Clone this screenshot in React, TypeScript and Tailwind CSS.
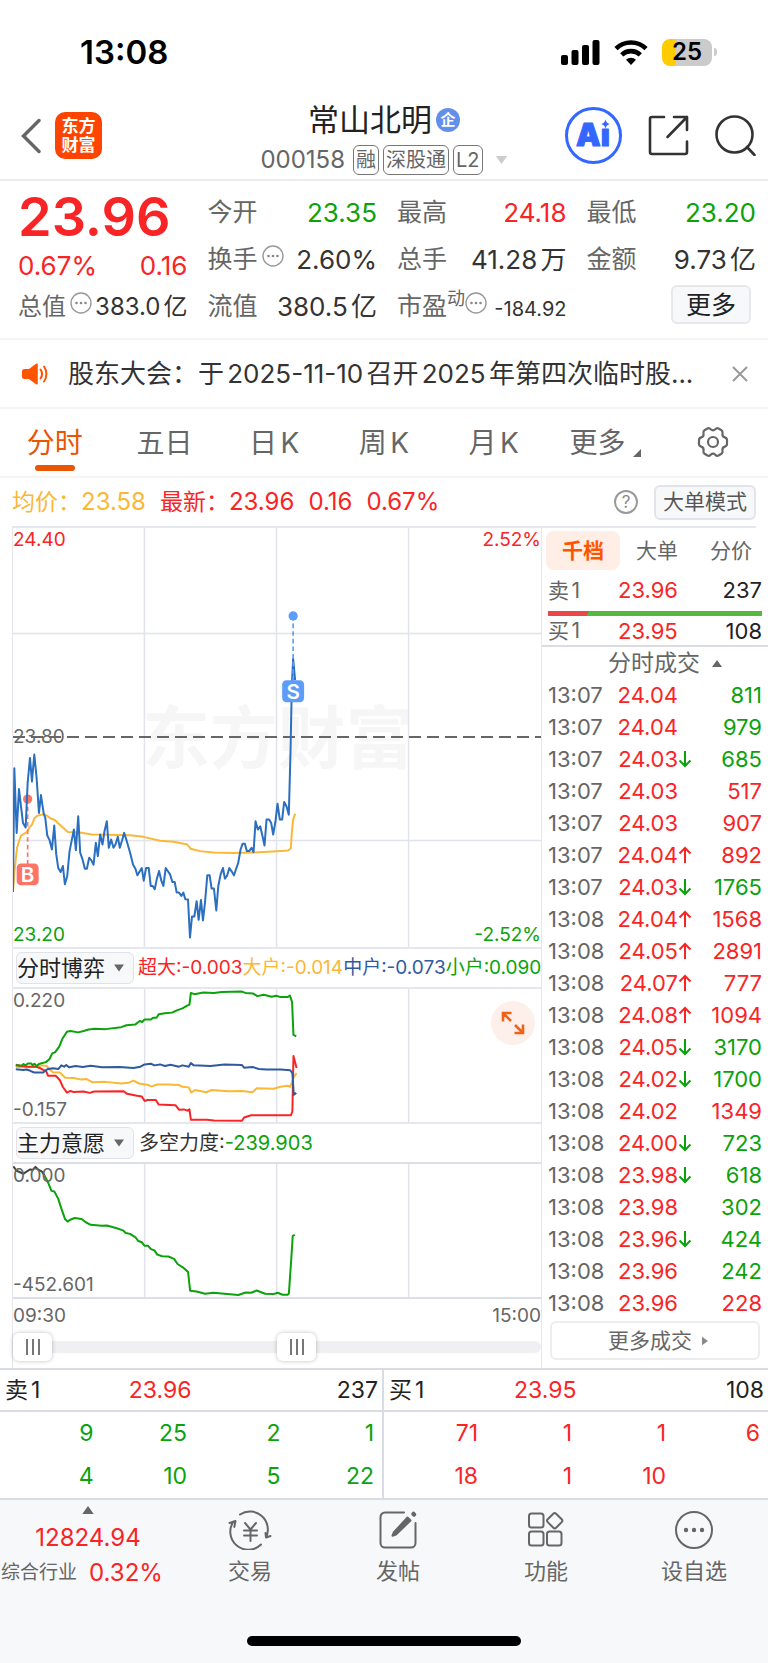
import { useState } from 'react';
import type { ReactNode } from 'react';

const RED = 'text-[#f92425]';
const GREEN = 'text-[#0ba20b]';

interface Trade {
  time: string;
  price: string;
  dir?: 'up' | 'down';
  volume: number;
  buy?: boolean;
}

const trades: Trade[] = [
  { time: '13:07', price: '24.04', volume: 811 },
  { time: '13:07', price: '24.04', volume: 979 },
  { time: '13:07', price: '24.03', dir: 'down', volume: 685 },
  { time: '13:07', price: '24.03', volume: 517, buy: true },
  { time: '13:07', price: '24.03', volume: 907, buy: true },
  { time: '13:07', price: '24.04', dir: 'up', volume: 892, buy: true },
  { time: '13:07', price: '24.03', dir: 'down', volume: 1765 },
  { time: '13:08', price: '24.04', dir: 'up', volume: 1568, buy: true },
  { time: '13:08', price: '24.05', dir: 'up', volume: 2891, buy: true },
  { time: '13:08', price: '24.07', dir: 'up', volume: 777, buy: true },
  { time: '13:08', price: '24.08', dir: 'up', volume: 1094, buy: true },
  { time: '13:08', price: '24.05', dir: 'down', volume: 3170 },
  { time: '13:08', price: '24.02', dir: 'down', volume: 1700 },
  { time: '13:08', price: '24.02', volume: 1349, buy: true },
  { time: '13:08', price: '24.00', dir: 'down', volume: 723 },
  { time: '13:08', price: '23.98', dir: 'down', volume: 618 },
  { time: '13:08', price: '23.98', volume: 302 },
  { time: '13:08', price: '23.96', dir: 'down', volume: 424 },
  { time: '13:08', price: '23.96', volume: 242 },
  { time: '13:08', price: '23.96', volume: 228, buy: true },
];

const depth = [
  { label: '卖1', price: '23.96', volume: 237, color: GREEN, rows: [['9', '25', '2', '1'], ['4', '10', '5', '22']] },
  { label: '买1', price: '23.95', volume: 108, color: RED, rows: [['71', '1', '1', '6'], ['18', '1', '10', '']] },
];

const periods = ['分时', '五日', '日K', '周K', '月K'];

const PRICE_LINE =
  '38,1118 42,745 49,940 56,808 62,860 68,910 76,924 82,790 89,714 95,785 102,704 109,775 116,880 122,826 130,880 135,895 141,948 148,962 155,990 162,918 168,1005 174,1046 181,1058 188,1040 194,1095 201,1070 208,995 214,965 221,930 227,992 234,890 240,1000 247,1020 254,1048 260,1048 267,1015 273,1022 280,1036 287,970 293,1010 300,945 307,975 313,935 320,905 326,985 333,960 340,985 346,975 353,952 359,985 366,962 372,940 380,965 390,1000 399,1036 406,1048 412,1068 425,1046 431,1084 438,1046 446,1046 452,1100 458,1100 464,1110 470,1080 477,1055 484,1085 490,1100 497,1046 510,1065 517,1088 524,1088 530,1120 537,1120 544,1130 550,1120 556,1140 564,1141 570,1255 576,1192 583,1192 590,1146 596,1202 603,1142 609,1204 615,1150 622,1068 629,1068 635,1108 642,1108 649,1174 655,1100 662,1065 669,1046 675,1078 682,1068 688,1046 695,1056 702,1068 715,1030 722,990 728,973 735,973 741,995 748,995 755,985 761,998 767,905 774,930 781,920 788,950 794,978 800,900 808,900 814,910 820,945 827,905 833,852 840,900 847,900 853,847 860,860 867,885 872,700 876,500 880,415 886,480';
const AVG_LINE =
  '38,1118 42,1060 50,985 62,948 80,938 86,926 95,915 103,895 112,888 130,884 140,888 150,896 165,902 178,915 203,937 235,938 275,945 320,946 390,947 430,952 480,964 520,967 560,974 566,980 572,988 600,995 640,999 700,1001 760,999 820,996 865,993 873,987 876,940 880,900 886,882';

const SMALL_HOLDERS =
  '44,374 60,375 66,370 72,374 78,368 88,368 92,374 97,369 104,376 110,370 130,364 140,355 148,337 156,334 168,316 178,290 190,270 200,268 222,272 238,268 252,263 270,261 300,262 345,256 360,250 385,248 398,237 405,240 412,232 430,232 436,227 446,227 452,216 470,213 490,211 504,204 520,198 532,190 540,186 544,150 554,154 580,149 610,150 632,147 690,146 700,150 722,152 734,160 752,156 775,162 788,159 800,163 820,163 827,158 833,178 837,280 845,284';
const MID_HOLDERS =
  '44,386 66,388 74,387 84,390 96,396 122,396 134,386 150,383 166,385 174,374 182,378 188,373 196,380 215,376 235,379 258,375 290,380 340,379 380,382 400,378 412,371 430,369 440,374 456,371 470,376 486,372 510,378 520,374 538,378 544,367 552,374 600,376 640,371 690,373 696,381 720,379 738,385 760,387 800,387 828,389 834,398 838,465 845,459';
const LARGE_HOLDERS =
  '44,378 70,380 100,379 120,374 132,376 140,386 150,395 170,396 185,412 210,413 230,418 245,416 262,426 300,425 345,430 365,428 380,421 396,430 420,434 432,439 448,433 480,433 510,435 520,440 538,442 545,458 556,450 588,457 604,450 650,454 690,453 720,457 732,445 780,446 800,440 820,437 828,440 838,410 846,398';
const HUGE_HOLDERS =
  '44,372 60,376 80,378 100,378 112,382 122,388 130,390 136,406 158,406 170,420 178,440 190,458 200,453 208,456 238,455 255,459 268,455 352,454 362,462 390,468 404,470 412,484 420,481 444,481 452,495 500,497 510,511 524,510 534,514 540,510 544,542 590,542 610,544 690,545 696,535 716,528 830,528 834,515 837,345 846,382';

const WILL_START = '37,132 46,146 66,155 76,148 84,142 92,143 100,134 108,142 118,148 126,160';
const WILL_LINE =
  '126,160 136,182 146,208 154,210 165,232 174,262 185,296 192,303 198,298 212,292 232,295 244,305 258,313 290,316 304,315 330,323 350,330 358,338 370,341 386,352 394,363 404,367 412,378 422,378 430,388 440,392 448,405 462,410 480,411 496,418 506,434 522,445 536,459 542,517 560,519 585,526 608,523 640,526 680,530 700,522 716,523 732,516 756,526 780,527 792,523 806,529 820,529 824,525 830,430 835,347 841,344';

function Triangle({ className }: { className?: string }) {
  return (
    <svg viewBox="0 0 10 7" className={className} aria-hidden="true">
      <path d="M0 7 5 0l5 7z" fill="currentColor" />
    </svg>
  );
}

function MoreDots({ className = '' }: { className?: string }) {
  return (
    <svg viewBox="0 0 22 22" className={`size-[22px] shrink-0 ${className}`} fill="none" aria-hidden="true">
      <circle cx="11" cy="11" r="10" stroke="#999" strokeWidth="1.4" />
      <g fill="#888">
        <circle cx="6.5" cy="11" r="1.3" />
        <circle cx="11" cy="11" r="1.3" />
        <circle cx="15.5" cy="11" r="1.3" />
      </g>
    </svg>
  );
}

function Arrow({ dir }: { dir: 'up' | 'down' }) {
  return (
    <svg
      viewBox="0 0 14 18"
      className={`h-[18px] w-[14px] ${dir === 'up' ? RED : GREEN}`}
      fill="none"
      stroke="currentColor"
      strokeWidth="2"
      aria-hidden="true"
    >
      {dir === 'up' ? <path d="M7 17V2M1.500 7.500 7 2l5.500 5.500" /> : <path d="M7 1v15M1.500 10.500 7 16l5.500-5.500" />}
    </svg>
  );
}

function StatusBar() {
  return (
    <div className="flex h-[84px] items-center justify-between pt-5 pr-[51px] pl-20 text-black">
      <span className="text-[33px] leading-8 font-semibold">13:08</span>
      <div className="flex items-center gap-[14px]">
        <svg viewBox="0 0 39 25" className="h-[25px] w-[39px]" aria-hidden="true">
          <rect x="0" y="15" width="7" height="10" rx="2" />
          <rect x="10.500" y="10" width="7" height="15" rx="2" />
          <rect x="21" y="5" width="7" height="20" rx="2" />
          <rect x="31.500" y="0" width="7" height="25" rx="2" />
        </svg>
        <svg viewBox="0 0 34 25" className="h-[25px] w-[34px]" fill="none" stroke="#000" strokeWidth="4.600" aria-hidden="true">
          <path d="M2 8.600a21.500 21.500 0 0 1 30 0" />
          <path d="M7.700 14.800a13.500 13.500 0 0 1 18.600 0" />
          <path d="M17 25l-5-5.200a7.400 7.400 0 0 1 10 0z" fill="#000" stroke="none" />
        </svg>
        <div className="flex items-center gap-[2px]">
          <div className="flex h-[27px] w-[50px] items-center justify-center rounded-lg bg-[linear-gradient(90deg,#ffcc00_26%,#cbcbcb_26%)] text-[24px] leading-none font-semibold">
            25
          </div>
          <span className="h-2 w-[3px] rounded-r-full bg-[#cbcbcb]" />
        </div>
      </div>
    </div>
  );
}

function Header() {
  return (
    <header className="grid h-[97px] grid-cols-[1fr_auto_1fr] items-center border-b-2 border-[#ececec] px-3">
      <div className="flex items-center gap-[14px] pt-2 pl-[9px]">
        <button aria-label="返回">
          <svg viewBox="0 0 20 36" className="h-9 w-5" fill="none" stroke="#666" strokeWidth="3.400" strokeLinecap="round" aria-hidden="true">
            <path d="M18 2.500 2.500 18 18 33.500" />
          </svg>
        </button>
        <a href="#home" className="flex size-[47px] flex-col items-center justify-center rounded-[10px] bg-[#ff4400] text-[17px] leading-[19px] font-bold text-white">
          <span>东方</span>
          <span>财富</span>
        </a>
      </div>

      <div className="flex flex-col items-center gap-[2px] pt-[14px]">
        <h1 className="flex items-center gap-1 text-[31px] leading-10 text-[#222]">
          常山北明
          <span className="flex size-6 items-center justify-center rounded-full bg-[#638fec] text-[15px] leading-none font-bold text-white">企</span>
        </h1>
        <div className="flex items-center gap-1 text-[#666]">
          <span className="pr-1 text-[24px] leading-9">000158</span>
          <span className="rounded-md border border-[#777] px-[2px] text-[20px] leading-7">融</span>
          <span className="rounded-md border border-[#777] px-[2px] text-[20px] leading-7">深股通</span>
          <span className="rounded-md border border-[#777] px-[2px] text-[20px] leading-7">L2</span>
          <button aria-label="切换股票" className="pl-2">
            <Triangle className="h-2 w-[13px] rotate-180 text-[#ccc]" />
          </button>
        </div>
      </div>

      <div className="flex items-center justify-end gap-[26px] pt-2">
        <button aria-label="Ai">
          <svg viewBox="0 0 57 57" className="size-[57px]" aria-hidden="true">
            <circle cx="28.500" cy="28.500" r="27" fill="none" stroke="#3367ff" strokeWidth="3" />
            <text x="11" y="39" fontSize="31" fontWeight="900" fill="#3367ff" stroke="#3367ff" strokeWidth="1" strokeLinejoin="round" className="font-['Inter']">Aı</text>
            <path d="M40.500 12.500c.9 3 1.700 3.800 4.600 4.600-2.900.8-3.700 1.600-4.600 4.600-.9-3-1.700-3.800-4.600-4.600 2.900-.8 3.700-1.600 4.600-4.600z" fill="#3367ff" />
          </svg>
        </button>
        <button aria-label="分享">
          <svg viewBox="0 0 41 41" className="size-[41px]" fill="none" stroke="#333" strokeWidth="2.600" strokeLinecap="round" strokeLinejoin="round" aria-hidden="true">
            <path d="M16 2H4a2 2 0 0 0-2 2v33a2 2 0 0 0 2 2h33a2 2 0 0 0 2-2V26.500" />
            <path d="M26 2h13v13M39 2 19.500 22" />
          </svg>
        </button>
        <button aria-label="搜索">
          <svg viewBox="0 0 41 41" className="size-[41px]" fill="none" stroke="#333" strokeWidth="2.600" strokeLinecap="round" aria-hidden="true">
            <circle cx="19.500" cy="19.500" r="18" />
            <path d="m32 32 7.500 8" />
          </svg>
        </button>
      </div>
    </header>
  );
}

function Stat({ label, value, color = 'text-[#333]', children }: { label: string; value: string; color?: string; children?: ReactNode }) {
  return (
    <div className="flex h-[47px] items-center justify-between whitespace-nowrap">
      <dt className="flex items-center gap-1 text-[25px] text-[#666]">
        {label}
        {children}
      </dt>
      <dd className={color}>{value}</dd>
    </div>
  );
}

function Quote() {
  return (
    <section className="grid grid-cols-4 gap-x-5 border-b-2 border-[#f5f5f5] pt-2 pr-3 pb-2 pl-[18px] text-[26px] [text-autospace:normal]">
      <div className={RED}>
        <div className="h-[59px] text-[54px] leading-[55px] font-semibold">23.96</div>
        <div className="flex h-[35px] items-center justify-between">
          <span>0.67%</span>
          <span>0.16</span>
        </div>
        <dl className="text-[24px]">
          <div className="flex h-[47px] items-center justify-between whitespace-nowrap">
            <dt className="flex items-center text-[#666]">
              总值
              <MoreDots className="-mt-2 ml-1" />
            </dt>
            <dd className="text-[#333]">383.0亿</dd>
          </div>
        </dl>
      </div>
      <dl>
        <Stat label="今开" value="23.35" color={GREEN} />
        <Stat label="换手" value="2.60%">
          <MoreDots className="-mt-2" />
        </Stat>
        <Stat label="流值" value="380.5亿" />
      </dl>
      <dl>
        <Stat label="最高" value="24.18" color={RED} />
        <Stat label="总手" value="41.28万" />
        <div className="flex h-[47px] items-center justify-between whitespace-nowrap">
          <dt className="flex items-center text-[25px] text-[#666]">
            市盈
            <span className="-mt-4 text-[18px] leading-5">动</span>
            <MoreDots className="-mt-2" />
          </dt>
          <dd className="pt-1 text-[20px] text-[#333]">-184.92</dd>
        </div>
      </dl>
      <div>
        <dl>
          <Stat label="最低" value="23.20" color={GREEN} />
          <Stat label="金额" value="9.73亿" />
        </dl>
        <div className="flex justify-end pt-[2px] pr-[5px]">
          <button className="h-[39px] w-20 rounded-md border-2 border-[#e6e8ec] bg-[#f7f8fa] text-[25px] leading-8 text-[#222]">更多</button>
        </div>
      </div>
    </section>
  );
}

function Notice() {
  return (
    <section className="flex h-[69px] items-center border-b-2 border-[#f5f5f5] pr-5 pl-[22px]">
      <svg viewBox="0 0 26 22" className="h-[22px] w-[26px] shrink-0" aria-hidden="true">
        <path d="M2.500 6H7l7-5.200c1-.6 1.800-.2 1.800 1v18.400c0 1.200-.8 1.600-1.800 1L7 16H2.500A2.500 2.500 0 0 1 0 13.500v-5A2.500 2.500 0 0 1 2.500 6z" fill="#ff5500" />
        <path d="M18.500 6.500c1.800 2.600 1.800 6.400 0 9M22 3.500c3.200 4.400 3.200 10.600 0 15" fill="none" stroke="#ff5500" strokeWidth="2" strokeLinecap="round" />
      </svg>
      <p className="min-w-0 flex-1 truncate pl-5 text-[26px] text-[#333] [text-autospace:normal]">股东大会：于2025-11-10召开2025年第四次临时股...</p>
      <button aria-label="关闭">
        <svg viewBox="0 0 16 16" className="size-4" fill="none" stroke="#999" strokeWidth="2" aria-hidden="true">
          <path d="m1 1 14 14M15 1 1 15" />
        </svg>
      </button>
    </section>
  );
}

function PeriodTabs() {
  const [active, setActive] = useState('分时');
  return (
    <nav className="grid h-[69px] grid-cols-7 border-b-2 border-[#f5f5f5] text-[28px] text-[#666]">
      {periods.map((p) => (
        <button
          key={p}
          onClick={() => setActive(p)}
          className={`flex flex-col items-center pt-3 leading-[44px] [text-autospace:normal] ${active === p ? 'text-[#ea5504]' : ''}`}
        >
          {p}
          {active === p && <span className="h-[6px] w-10 rounded-full bg-[#ea5504]" />}
        </button>
      ))}
      <button className="flex items-start justify-center gap-2 pt-3 pl-1 leading-[44px]">
        更多
        <svg viewBox="0 0 8 8" className="mt-7 size-2" aria-hidden="true">
          <path d="M8 0v8H0z" fill="#666" />
        </svg>
      </button>
      <button aria-label="设置" className="flex justify-center pt-[17px]">
        <svg viewBox="0 0 32 32" className="size-8" fill="none" stroke="#666" strokeWidth="2.200" strokeLinejoin="round" aria-hidden="true">
          <path d="M10.500 2.500c1.500-.8 2.500 0 3.200.8 1.400 1.300 3.200 1.300 4.600 0 .7-.8 1.700-1.600 3.200-.8l3 1.800c1.300.8 1.200 2 1 3.100-.4 1.900.5 3.400 2.300 4 1.200.4 2.200 1 2.200 2.600v4c0 1.600-1 2.200-2.200 2.600-1.800.6-2.700 2.100-2.300 4 .2 1.100.3 2.300-1 3.100l-3 1.800c-1.500.8-2.500 0-3.200-.8-1.400-1.300-3.200-1.300-4.600 0-.7.800-1.700 1.600-3.200.8l-3-1.800c-1.300-.8-1.200-2-1-3.100.4-1.900-.5-3.400-2.300-4C3 20.200 2 19.600 2 18v-4c0-1.600 1-2.200 2.200-2.600 1.800-.6 2.700-2.100 2.300-4-.2-1.100-.3-2.300 1-3.100z" />
          <circle cx="16" cy="16" r="5" />
        </svg>
      </button>
    </nav>
  );
}

function Summary() {
  return (
    <div className="mx-3 flex h-[50px] items-center border-b-2 border-[#e4e7ee] text-[24px]">
      <span className="text-[#fbb836]">
        <span className="text-[23px]">均价：</span>23.58
      </span>
      <span className={`flex gap-[14px] pl-[14px] ${RED}`}>
        <span>
          <span className="text-[23px]">最新：</span>23.96
        </span>
        <span>0.16</span>
        <span>0.67%</span>
      </span>
      <button aria-label="说明" className="ml-auto flex size-6 items-center justify-center rounded-full border-2 border-[#999] text-[17px] leading-none text-[#888]">
        ?
      </button>
      <button className="ml-4 h-[35px] rounded-md border-2 border-[#e1e4ea] bg-[#f7f8fa] px-[7px] text-[21px] leading-7 text-[#555]">大单模式</button>
    </div>
  );
}

function Marker({ x, y, dotY, color, text }: { x: number; y: number; dotY: number; color: string; text: string }) {
  return (
    <g>
      <line x1={x} x2={x} y1={dotY} y2={y} stroke={color} strokeWidth="5" strokeDasharray="14 9" />
      <circle cx={x} cy={dotY} r="14" fill={color} />
      <rect x={x - 33} y={y - 33} width="66" height="66" rx="13" fill={color} />
      <text x={x} y={y + 22} textAnchor="middle" fontSize="62" fontWeight="600" fill="#fff">{text}</text>
    </g>
  );
}

function Plot({ points, color }: { points: string; color: string }) {
  return <polyline points={points} fill="none" stroke={color} strokeWidth="2" strokeLinejoin="round" vectorEffect="non-scaling-stroke" />;
}

function PriceChart() {
  return (
    <div className="relative h-[421px] border-b-2 border-[#e4e7ee] text-[19px] leading-6">
      <svg viewBox="38 21 1587 1263" preserveAspectRatio="none" className="size-full" role="img" aria-label="分时走势">
        <text x="426" y="730" fontSize="204" fontWeight="700" fill="#f6f6f6">东方财富</text>
        <path d="M433 21v1263M830 21v1263M1227 21v1263M38 339h1587M38 963h1587" stroke="#e0e3ec" strokeWidth="1.500" vectorEffect="non-scaling-stroke" />
        <path d="M38 651h1587" stroke="#666" strokeWidth="2" strokeDasharray="12 6" vectorEffect="non-scaling-stroke" />
        <Plot points={AVG_LINE} color="#fbb836" />
        <Marker x={82} y={1065} dotY={838} color="#fb7466" text="B" />
        <Plot points={PRICE_LINE} color="#2b6fc0" />
        <Marker x={880} y={513} dotY={286} color="#5c9dfb" text="S" />
      </svg>
      <span className={`absolute top-0 left-0 ${RED}`}>24.40</span>
      <span className={`absolute top-0 right-0 ${RED}`}>2.52%</span>
      <span className="absolute top-[197px] left-0 text-[#666]">23.80</span>
      <span className={`absolute bottom-0 left-0 ${GREEN}`}>23.20</span>
      <span className={`absolute right-0 bottom-0 ${GREEN}`}>-2.52%</span>
    </div>
  );
}

function IndicatorSelect({ label, options }: { label: string; options: string[] }) {
  return (
    <div className="relative ml-[3px] w-[118px] shrink-0">
      <select
        aria-label={label}
        className="block h-8 w-full appearance-none rounded-md border border-[#e0e2e7] bg-[#f7f8fa] text-[22px] leading-7 text-[#222]"
      >
        {options.map((o) => (
          <option key={o}>{o}</option>
        ))}
      </select>
      <Triangle className="pointer-events-none absolute top-3 right-[10px] h-2 w-[10px] rotate-180 text-[#666]" />
    </div>
  );
}

function HoldersChart() {
  return (
    <div className="relative h-[137px] border-y-2 border-[#e4e7ee] text-[19px] leading-6 text-[#666]">
      <svg viewBox="36 138 1508 411" preserveAspectRatio="none" className="size-full" role="img" aria-label="分时博弈">
        <path d="M412 138v411M789 138v411M1166 138v411" stroke="#e0e3ec" strokeWidth="1.500" vectorEffect="non-scaling-stroke" />
        <Plot points={LARGE_HOLDERS} color="#fbb836" />
        <Plot points={HUGE_HOLDERS} color="#f92425" />
        <Plot points={MID_HOLDERS} color="#2f5a9f" />
        <Plot points={SMALL_HOLDERS} color="#0ba20b" />
      </svg>
      <span className="absolute top-0 left-0">0.220</span>
      <span className="absolute bottom-0 left-0">-0.157</span>
      <button aria-label="全屏" className="absolute top-3 right-[6px] flex size-11 items-center justify-center rounded-full bg-[#fdf0ea]">
        <svg viewBox="0 0 24 24" className="size-6" fill="none" stroke="#f0621a" strokeWidth="2.600" aria-hidden="true">
          <path d="M2 10.500V2h8.500M2.500 2.500 10 10M22 13.500V22h-8.500M21.500 21.500 14 14" />
        </svg>
      </button>
    </div>
  );
}

function WillChart() {
  return (
    <div className="relative h-[137px] border-y-2 border-[#dcdfe8] text-[19px] leading-6 text-[#666]">
      <svg viewBox="36 125 1508 411" preserveAspectRatio="none" className="size-full" role="img" aria-label="主力意愿">
        <path d="M412 125v411M789 125v411M1166 125v411" stroke="#e0e3ec" strokeWidth="1.500" vectorEffect="non-scaling-stroke" />
        <Plot points={WILL_START} color="#444" />
        <Plot points={WILL_LINE} color="#0ba20b" />
      </svg>
      <span className="absolute top-0 left-0">0.000</span>
      <span className="absolute bottom-0 left-0">-452.601</span>
    </div>
  );
}

const rangeClass =
  'pointer-events-none absolute inset-0 h-7 w-full appearance-none bg-transparent [&::-webkit-slider-thumb]:pointer-events-auto [&::-webkit-slider-thumb]:h-7 [&::-webkit-slider-thumb]:w-[39px] [&::-webkit-slider-thumb]:appearance-none [&::-webkit-slider-thumb]:rounded-md [&::-webkit-slider-thumb]:bg-white [&::-webkit-slider-thumb]:bg-[linear-gradient(90deg,#777_2px,transparent_2px,transparent_6px,#777_6px,#777_8px,transparent_8px,transparent_12px,#777_12px)] [&::-webkit-slider-thumb]:bg-[length:14px_16px] [&::-webkit-slider-thumb]:bg-center [&::-webkit-slider-thumb]:bg-no-repeat [&::-webkit-slider-thumb]:shadow-[0_0_4px_rgba(0,0,0,0.25)]';

function TimeRange() {
  const [from, setFrom] = useState(0);
  const [to, setTo] = useState(54);
  return (
    <>
      <div className="flex h-[34px] items-center justify-between text-[19px] text-[#666]">
        <span>09:30</span>
        <span>15:00</span>
      </div>
      <div className="pb-[7px]">
        <div className="relative flex h-7 items-center">
          <div className="h-3 w-full rounded-full bg-[#f0f0f3]" />
          <input type="range" aria-label="开始时间" className={rangeClass} value={from} onChange={(e) => setFrom(Number(e.target.value))} />
          <input type="range" aria-label="结束时间" className={rangeClass} value={to} onChange={(e) => setTo(Number(e.target.value))} />
        </div>
      </div>
    </>
  );
}

function Charts() {
  return (
    <div className="min-w-0 flex-1 pl-3">
      <div className="border-x border-[#e4e7ee]">
        <PriceChart />
        <div className="flex h-[38px] items-center gap-1 text-[19px] whitespace-nowrap">
          <IndicatorSelect label="副图指标一" options={['分时博弈', '主力意愿']} />
          <div className="flex flex-1 justify-between">
            <span className={RED}>超大:-0.003</span>
            <span className="text-[#fbb836]">大户:-0.014</span>
            <span className="text-[#2f5a9f]">中户:-0.073</span>
            <span className={GREEN}>小户:0.090</span>
          </div>
        </div>
        <HoldersChart />
        <div className="flex h-[38px] items-center gap-[5px] text-[20px] text-[#333]">
          <IndicatorSelect label="副图指标二" options={['主力意愿', '分时博弈']} />
          <span>
            多空力度:<span className={GREEN}>-239.903</span>
          </span>
        </div>
        <WillChart />
        <TimeRange />
      </div>
    </div>
  );
}

function Level({ label, price, volume }: { label: string; price: string; volume: number }) {
  return (
    <div className="flex items-center justify-between px-[6px] text-[22px]">
      <span className="w-[62px] text-[21px] text-[#666] [text-autospace:normal]">{label}</span>
      <span className={`flex-1 pl-2 ${RED}`}>{price}</span>
      <span className="text-[#222]">{volume}</span>
    </div>
  );
}

function TradePanel() {
  return (
    <aside className="w-[226px] shrink-0">
      <div className="grid grid-cols-3 pt-[3px] pl-1 text-[21px] leading-[39px] text-[#666]">
        <button className="rounded-lg bg-[#ffeee6] font-bold text-[#ff5500]">千档</button>
        <button>大单</button>
        <button>分价</button>
      </div>
      <div className="flex h-[41px] flex-col justify-center">
        <Level label="卖1" price="23.96" volume={237} />
      </div>
      <div className="mx-[6px] h-[5px] bg-[linear-gradient(120deg,#e94748_19%,#55b83f_19%)]" />
      <div className="flex h-[31px] flex-col justify-end border-b-2 border-[#d9dce2] leading-7">
        <Level label="买1" price="23.95" volume={108} />
      </div>
      <button className="flex h-8 w-full items-center justify-center gap-3 pl-5 text-[23px] text-[#666]">
        分时成交
        <Triangle className="h-[7px] w-[10px]" />
      </button>
      <table className="w-full table-fixed text-[22px] leading-8">
        <tbody>
          {trades.map((t, i) => (
            <tr key={i} className="h-8">
              <td className="w-[70px] p-0 pl-[6px] text-[#666]">{t.time}</td>
              <td className={`w-20 p-0 ${RED}`}>
                <span className="flex items-center justify-end">
                  {t.price}
                  <span className="w-[14px]">{t.dir && <Arrow dir={t.dir} />}</span>
                </span>
              </td>
              <td className={`p-0 pr-[6px] text-right ${t.buy ? RED : GREEN}`}>{t.volume}</td>
            </tr>
          ))}
        </tbody>
      </table>
      <div className="px-2 pt-[2px]">
        <button className="flex h-[39px] w-full items-center justify-center gap-2 rounded-md border-2 border-[#ededf0] pl-2 text-[21px] text-[#666]">
          更多成交
          <Triangle className="h-[6px] w-[10px] rotate-90 text-[#888]" />
        </button>
      </div>
    </aside>
  );
}

function Depth() {
  return (
    <section className="grid grid-cols-2 border-y-2 border-[#d9dce2] text-[23px]">
      {depth.map((side) => (
        <div key={side.label} className="border-[#d9dce2] first:border-r-2">
          <div className="flex h-[42px] items-center border-b-2 border-[#d9dce2] pr-1 pl-[5px] text-[#222]">
            <span className="w-1/4 [text-autospace:normal]">{side.label}</span>
            <span className={`w-1/4 text-right ${RED}`}>{side.price}</span>
            <span className="w-1/2 text-right">{side.volume}</span>
          </div>
          <div className="pr-2">
            <table className="w-full table-fixed">
              <tbody>
                {side.rows.map((row, r) => (
                  <tr key={r} className="h-[43px]">
                    {row.map((cell, c) => (
                      <td key={c} className={`p-0 text-right ${side.color}`}>
                        {cell}
                      </td>
                    ))}
                  </tr>
                ))}
              </tbody>
            </table>
          </div>
        </div>
      ))}
    </section>
  );
}

function NavItem({ label, children }: { label: string; children: ReactNode }) {
  return (
    <button className="flex flex-1 flex-col items-center gap-[5px] pt-[10px] text-[22px] leading-8 text-[#666]">
      <svg viewBox="0 0 44 40" className="h-10 w-11" fill="none" stroke="#666" strokeWidth="2" strokeLinecap="round" strokeLinejoin="round" aria-hidden="true">
        {children}
      </svg>
      {label}
    </button>
  );
}

function BottomNav() {
  return (
    <footer className="flex-1 bg-[#f7f8fa]">
      <div className="flex h-[136px]">
        <button className={`flex w-44 shrink-0 flex-col items-center pt-[6px] text-[24px] leading-8 ${RED}`}>
          <Triangle className="h-2 w-[14px] text-[#666]" />
          <span className="pt-2">12824.94</span>
          <span className="flex items-center gap-3 self-start pt-[3px] pl-px whitespace-nowrap">
            <span className="text-[19px] text-[#666]">综合行业</span>
            0.32%
          </span>
        </button>
        <NavItem label="交易">
          <path d="M12 4.500a18 18 0 0 1 26 23M38 27.500l-.5-4.500M38 27.500l4.500-1.500M33 34.500a18 18 0 0 1-27.500-23M1.500 13l6-2-1.200 6" />
          <path d="m17 13 5.500 6.500L28 13M22.500 19.500V31M16 20.500h13M16 25.500h13" />
        </NavItem>
        <NavItem label="发帖">
          <path d="M28 2.500H9A4.500 4.500 0 0 0 4.500 7v26A4.500 4.500 0 0 0 9 37.500h26a4.500 4.500 0 0 0 4.500-4.500V13" />
          <path d="m31.500 7.500 3 3L20 24.500l-3.500 1.200 1.200-3.200z" fill="#666" />
          <path d="m37.500 4 .5.500" strokeWidth="4.500" />
        </NavItem>
        <NavItem label="功能">
          <rect x="5" y="3.500" width="14.500" height="14" rx="2.500" />
          <rect x="5" y="21.500" width="14.500" height="14" rx="2.500" />
          <rect x="23" y="21.500" width="14.500" height="14" rx="2.500" />
          <path d="M29.300 3.700a2 2 0 0 1 2.800 0l5.600 5.600a2 2 0 0 1 0 2.800l-5.600 5.600a2 2 0 0 1-2.800 0l-5.600-5.600a2 2 0 0 1 0-2.800z" />
        </NavItem>
        <NavItem label="设自选">
          <circle cx="22" cy="20" r="18" />
          <g fill="#666" stroke="none">
            <circle cx="14" cy="20" r="2.200" />
            <circle cx="22" cy="20" r="2.200" />
            <circle cx="30" cy="20" r="2.200" />
          </g>
        </NavItem>
      </div>
      <div className="mx-auto mb-[17px] h-[10px] w-[274px] rounded-full bg-black" />
    </footer>
  );
}

export default function App() {
  return (
    <div className="flex min-h-screen flex-col bg-white font-['Inter','Noto_Sans_CJK_SC',sans-serif]">
      <StatusBar />
      <Header />
      <Quote />
      <Notice />
      <PeriodTabs />
      <Summary />
      <main className="flex">
        <Charts />
        <TradePanel />
      </main>
      <Depth />
      <BottomNav />
    </div>
  );
}
